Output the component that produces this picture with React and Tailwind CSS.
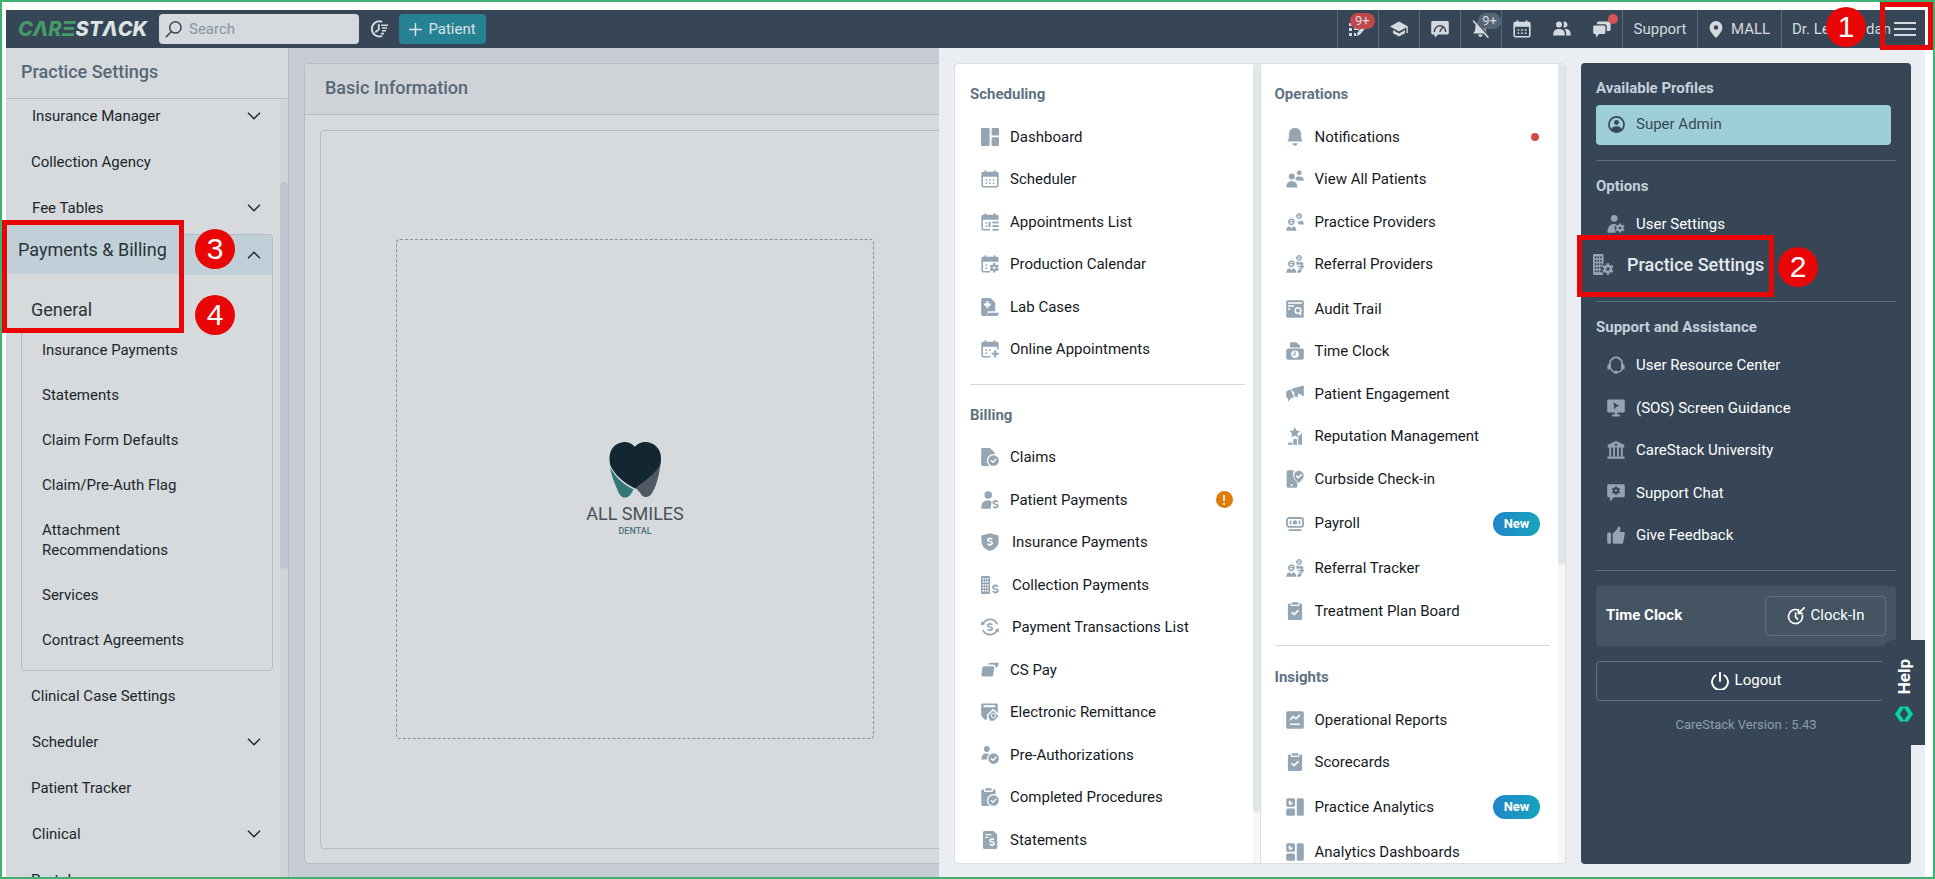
import React from "react";

const S = ({ children, size = "size-[18px]", cls = "" }) => (
  <svg viewBox="0 0 18 18" className={`${size} shrink-0 ${cls}`} fill="currentColor" aria-hidden="true">
    {children}
  </svg>
);

const Line = ({ d, w = 1.5, c = "currentColor" }) => (
  <path d={d} fill="none" stroke={c} strokeWidth={w} strokeLinecap="round" strokeLinejoin="round" />
);

const Gear = ({ x, y, r = 3, hole = "#fff", ring = "#fff" }) => (
  <g transform={`translate(${x} ${y})`}>
    <circle r={r + 2.2} fill={ring} />
    <circle r={r} />
    {[0, 60, 120].map((a) => (
      <rect key={a} x={-1.2} y={-r - 1.4} width={2.4} height={2 * r + 2.8} rx={0.5} transform={`rotate(${a})`} />
    ))}
    <circle r={r * 0.42} fill={hole} />
  </g>
);

const Dollar = ({ x, y, s = 1, c = "currentColor", w = 1.4 }) => (
  <g transform={`translate(${x} ${y}) scale(${s})`}>
    <path
      d="M2.3 -2.1C2 -3 1.2 -3.2 0 -3.2S-2.4 -2.8 -2.4 -1.6S-1.2 -.2 0 0S2.4 .4 2.4 1.6S1.4 3.2 0 3.2S-2.2 2.9 -2.5 2M0 -4.6V-3.2M0 3.2V4.6"
      fill="none" stroke={c} strokeWidth={w}
    />
  </g>
);

const CheckDisc = ({ x = 12.5, y = 12.5 }) => (
  <g transform={`translate(${x} ${y})`}>
    <circle r="6.6" fill="#fff" />
    <circle r="5.3" />
    <Line d="M-2.3 .1L-.6 1.8L2.5 -1.4" c="#fff" w={1.3} />
  </g>
);

const CalFrame = ({ full = true }) => (
  <>
    <path d="M2 1.8H16A1.6 1.6 0 0 1 17.6 3.4V6.8H.4V3.4A1.6 1.6 0 0 1 2 1.8Z" />
    <rect x="3.6" y="0.2" width="1.8" height="3" rx=".6" />
    <rect x="12.6" y="0.2" width="1.8" height="3" rx=".6" />
    <path d={full ? "M1.2 6V15.4A1.2 1.2 0 0 0 2.4 16.7H15.6A1.2 1.2 0 0 0 16.8 15.4V6" : "M1.2 6V15.4A1.2 1.2 0 0 0 2.4 16.7H9"} fill="none" stroke="currentColor" strokeWidth="1.6" />
  </>
);

const Dots = ({ pts }) => pts.map(([x, y]) => <rect key={`${x}-${y}`} x={x} y={y} width="1.6" height="1.6" />);

const Doctor = ({ x, y, s = 1 }) => (
  <g transform={`translate(${x} ${y}) scale(${s})`}>
    <circle cx="5" cy="3.2" r="2.6" fill="none" stroke="currentColor" strokeWidth="1.3" />
    <path d="M2.2 2.4H7.8V3.6H2.2Z" />
    <path d="M0 12C0 9 1.4 7.8 3.4 7.4L5 9.6L6.6 7.4C8.6 7.8 10 9 10 12Z" />
  </g>
);

const Tower = ({ hole }) => (
  <>
    <rect x="0" y="0" width="9" height="18" rx="1.2" />
    {[2, 5, 8, 11, 14].map((y) => (
      <g key={y} fill={hole}>
        <rect x="1.5" y={y} width="1.4" height="1.6" />
        <rect x="3.8" y={y} width="1.4" height="1.6" />
        <rect x="6.1" y={y} width="1.4" height="1.6" />
      </g>
    ))}
  </>
);

const Clipboard = () => (
  <>
    <path d="M3.2 1.4H4.6V3A1 1 0 0 0 5.6 4H12.4A1 1 0 0 0 13.4 3V1.4H14.8A1.3 1.3 0 0 1 16.1 2.7V16.6A1.3 1.3 0 0 1 14.8 17.9H3.2A1.3 1.3 0 0 1 1.9 16.6V2.7A1.3 1.3 0 0 1 3.2 1.4Z" />
    <rect x="5.6" y="0.3" width="6.8" height="2.4" rx=".8" />
    <Line d="M6.2 10.6L8.2 12.6L12 8.6" c="#fff" w={1.6} />
  </>
);

const Transfer = () => (
  <>
    <Doctor x={0.2} y={5.6} s={1.02} />
    <g transform="translate(9 0)">
      <circle cx="4" cy="3" r="2.3" fill="none" stroke="currentColor" strokeWidth="1.2" />
      <path d="M1.8 2.2H6.2V3.4H1.8Z" />
      <path d="M1 7.4L3.6 6.6L4.6 8L5.6 6.6L8.4 8.2V10H1.6Z" />
    </g>
    <path d="M11.4 15.4V9.6H18V18H11.4Z" fill="#fff" />
    <Line d="M12.2 11.6H17M15.4 9.8L17.2 11.6L15.4 13.2M14.6 13.6V16.2L12.4 17.2M13.8 14.6L12 16.8" w={1.5} />
  </>
);

const icons = {
  dashboard: <S><rect width="8.6" height="18" rx="1" /><rect x="10.6" width="7.4" height="7.6" rx="1" /><rect x="10.6" y="9.2" width="7.4" height="8.8" rx="1" /></S>,
  calendar: <S><CalFrame /><Dots pts={[[4.6, 9.2], [8.2, 9.2], [11.8, 9.2], [4.6, 12.4], [8.2, 12.4], [11.8, 12.4]]} /></S>,
  calList: <S><CalFrame full={false} /><Dots pts={[[4.6, 9.2], [4.6, 12.4]]} /><rect x="7.6" y="8.8" width="2" height="5.4" /><rect x="11.4" y="8.6" width="6.4" height="1.8" /><rect x="11.4" y="12.2" width="6.4" height="1.8" /><rect x="11.4" y="15.8" width="6.4" height="1.8" /></S>,
  calGear: <S><CalFrame full={false} /><Dots pts={[[4.6, 9.2], [4.6, 12.4]]} /><Gear x={13.2} y={12.8} r={3.3} /></S>,
  lab: <S><path d="M2 0H9.5L14.3 4.8V13.2H6.6V16C6.6 17.2 6.2 18 5 18H2A1.8 1.8 0 0 1 .2 16.2V1.8A1.8 1.8 0 0 1 2 0Z" /><path d="M7 14.8H17.8C17.8 17 16.8 18 15 18H6.2C6.8 17.2 7 16.4 7 14.8Z" /><path d="M6.4 3.2V10M3 6.6H9.8" stroke="#fff" strokeWidth="2.2" /></S>,
  calPlus: <S><path d="M2 1.8H16A1.6 1.6 0 0 1 17.6 3.4V6.8H.4V3.4A1.6 1.6 0 0 1 2 1.8Z" /><rect x="3.6" y=".2" width="1.8" height="3" rx=".6" /><rect x="12.6" y=".2" width="1.8" height="3" rx=".6" /><path d="M1.2 6V15.4A1.2 1.2 0 0 0 2.4 16.7H9.4M16.8 6V9.4" fill="none" stroke="currentColor" strokeWidth="1.6" /><Dots pts={[[4.6, 9.2], [8.2, 9.2], [4.6, 12.4]]} /><path d="M14.2 10.2V17.4M10.6 13.8H17.8" stroke="currentColor" strokeWidth="2" /></S>,
  claims: <S><path d="M1.6 0H9L13.6 4.6V18H1.6A1.4 1.4 0 0 1 .2 16.6V1.4A1.4 1.4 0 0 1 1.6 0Z" /><CheckDisc /></S>,
  patientPay: <S><circle cx="7.2" cy="4" r="3.8" /><path d="M.2 17.8C.2 11.8 2.6 9.4 7 9.4C8.6 9.4 9.8 9.8 10.6 10.4L9.6 17.8Z" /><Dollar x={14.6} y={13.2} s={0.98} w={1.7} /></S>,
  shield: <S><path d="M9 .2L17.6 2.6V8C17.6 13 14 16.4 9 17.8C4 16.4 .4 13 .4 8V2.6Z" /><Dollar x={9} y={8.6} s={0.95} c="#fff" w={1.6} /></S>,
  towerPay: <S><Tower hole="#fff" /><Dollar x={14.4} y={13} s={1.02} w={1.7} /></S>,
  transactions: <S><Line d="M2.2 5.4A7.8 7.8 0 0 1 16 5.6M2 12.4A7.8 7.8 0 0 0 16 12.2" w={1.7} /><path d="M17.8 10.2V14.6L13.8 12Z" /><path d="M.2 7.8V3.2L4.2 6Z" /><Dollar x={9} y={9} w={1.7} s={0.95} /></S>,
  cspay: <S><path d="M3 5.2H11.8A1.4 1.4 0 0 1 13.2 6.8L12.2 13.8A1.8 1.8 0 0 1 10.4 15.6H1.8A1.4 1.4 0 0 1 .4 14L1.4 7A1.8 1.8 0 0 1 3 5.2Z" /><path d="M6.8 3.6A3 3 0 0 1 9.6 1.8H17.8L17 5C16.4 6 15.6 6.6 14.6 6.6C14.6 4.8 13.6 3.6 11.8 3.6Z" /></S>,
  remit: <S><path d="M1.6 .4H15.4A1.4 1.4 0 0 1 16.8 1.8V15A1.4 1.4 0 0 1 15.4 16.4H3.4L.2 12.4V1.8A1.4 1.4 0 0 1 1.6 .4Z" /><rect x="2.6" y="2.2" width="11.6" height="2" fill="#fff" /><path d="M6.4 17.8L5.8 12L12 5.8L18 11V17.8Z" fill="#fff" /><path d="M7.2 12.8L12.2 7.8L17.4 13.2L12.6 17.8H9Z" /><circle cx="12.4" cy="12.6" r="2.1" fill="none" stroke="#fff" strokeWidth="1" /></S>,
  preauth: <S><circle cx="5.8" cy="3" r="2.9" /><path d="M.4 13.4C.4 9.4 2.4 7.6 5.6 7.6C8 7.6 9.4 8.2 10 9.6L7.6 13.4Z" /><CheckDisc x={12.6} y={12.6} /></S>,
  procedures: <S><path d="M1.6 1.4H3V3A1 1 0 0 0 4 4H11A1 1 0 0 0 12 3V1.4H13.2A1.3 1.3 0 0 1 14.5 2.7V17.9H1.6A1.3 1.3 0 0 1 .3 16.6V2.7A1.3 1.3 0 0 1 1.6 1.4Z" /><rect x="4.2" y=".3" width="6.6" height="2.2" rx=".8" /><CheckDisc /></S>,
  statement: <S><path d="M3.4 0H12.6L16.2 3.6V16.6A1.4 1.4 0 0 1 14.8 18H3.4A1.4 1.4 0 0 1 2 16.6V1.4A1.4 1.4 0 0 1 3.4 0Z" /><path d="M4.4 3.6H10.4M4.4 6.4H7.4" stroke="#fff" strokeWidth="1.4" /><Dollar x={11} y={11} s={0.9} c="#fff" w={1.6} /></S>,
  bell: <S><path d="M9 0C13 0 15 2.6 15 6.2C15 10.2 15.4 11.8 16.6 13.6H1.4C2.6 11.8 3 10.2 3 6.2C3 2.6 5 0 9 0Z" /><path d="M6.4 15.2H11.6C11.2 17 10.4 17.6 9 17.6S6.8 17 6.4 15.2Z" /></S>,
  people: <S><circle cx="5.8" cy="6.6" r="3" /><path d="M.3 17.6C.3 13 2.4 11.2 5.8 11.2S11.3 13 11.3 17.6Z" /><circle cx="13.2" cy="2.8" r="2.4" /><path d="M10.4 10.6C10 9.8 9.6 9.4 9.2 9C9.8 7.2 11.2 6.6 13.2 6.6C16.2 6.6 17.8 8 17.8 10.8Z" /></S>,
  doctors: <S><Doctor x={0.2} y={5.6} s={1.02} /><g transform="translate(9 0)"><circle cx="4" cy="3" r="2.3" fill="none" stroke="currentColor" strokeWidth="1.2" /><path d="M1.8 2.2H6.2V3.4H1.8Z" /><path d="M2 7.4L4 9L5.6 7.4C8 7.8 8.8 9 8.8 11.4H3.6Z" /></g></S>,
  transfer: <S><Transfer /></S>,
  audit: <S><rect x=".2" y=".2" width="17.6" height="17.6" rx="1.6" /><path d="M2 3H16M2 6H8M2 9H4.2" stroke="#fff" strokeWidth="1.4" /><circle cx="12" cy="10.6" r="2.8" fill="none" stroke="#fff" strokeWidth="1.5" /><path d="M13.8 12.6L15 15" stroke="#fff" strokeWidth="1.7" /></S>,
  timeclock: <S><path d="M4 5.4V1.4A1.2 1.2 0 0 1 5.2 .2H10.4L14 3.6V5.4Z" /><rect x=".2" y="6.6" width="17.6" height="11.2" rx="1.8" /><circle cx="9" cy="12.2" r="3.8" fill="#fff" /><Line d="M9 9.8V12.6H7.4" w={1.3} /></S>,
  megaphone: <S><path d="M17.8 .6V11.6L12.6 8.2L11.4 12.6L8.4 11.2L8.2 7L5.6 5.4L6.4 3.4Z" /><path d="M4.4 4.2L6.2 8L8 12.6L4.8 13L2.2 16.8L1.8 13L.2 12.2V6.4Z" /></S>,
  reputation: <S><path d="M8.8 0L10.4 3.6L14.2 4L11.4 6.6L12.2 10.4L8.8 8.4L5.4 10.4L6.2 6.6L3.4 4L7.2 3.6Z" /><rect x="2.2" y="15.6" width="4" height="2.2" /><rect x="7.2" y="12" width="3.8" height="5.8" /><path d="M12.2 9.4L14.6 7.6L16 5.2V17.8H12.2Z" /></S>,
  curbside: <S><path d="M2.2 .2H8C6.2 4 6.6 8 11.4 12.2V16.2A1.6 1.6 0 0 1 9.8 17.8H2.2A1.6 1.6 0 0 1 .6 16.2V1.8A1.6 1.6 0 0 1 2.2 .2Z" /><circle cx="5.8" cy="15.2" r="1" fill="#fff" /><path d="M12.8 .6C16 .6 18 2.8 18 5.8C18 9 15 11.4 12.8 13.2C10.6 11.4 7.8 9 7.8 5.8C7.8 2.8 9.8 .6 12.8 .6Z" stroke="#fff" strokeWidth=".6" /><Line d="M10.4 6L12.2 7.8L15.6 4.4" c="#fff" w={1.4} /></S>,
  payroll: <S><rect x="1" y="3" width="16" height="8.8" rx="2" fill="none" stroke="currentColor" strokeWidth="1.8" /><rect x="3.8" y="5.4" width="1.6" height="4" /><rect x="12.6" y="5.4" width="1.6" height="4" /><circle cx="9" cy="7.4" r="2.2" /><rect x="2.4" y="14.2" width="13.2" height="1.8" rx=".8" /></S>,
  clipboard: <S><Clipboard /></S>,
  report: <S><rect x=".2" y=".2" width="17.6" height="17.6" rx="1.6" /><Line d="M4.6 8.4L7.4 5.4L9.8 7.8L13.4 4.4M4.6 13.2H13.4" c="#fff" w={1.6} /></S>,
  analytics: <S><rect x=".2" y=".2" width="8.8" height="8.6" rx="1.6" /><path d="M4.6 2.4A2.2 2.2 0 1 0 6.8 4.6H4.6Z" fill="#fff" /><rect x=".2" y="10.6" width="8.8" height="7.2" rx="1.6" /><rect x="10.8" y=".2" width="7" height="17.6" rx="1.6" /></S>,
  userGear: <S><circle cx="7.2" cy="3.4" r="3.3" /><path d="M.4 17.8C.4 11.4 3 9 7.4 9C9 9 10 9.4 10.8 10L8.4 17.8Z" /><Gear x={13} y={13} r={3.2} hole="#364656" ring="#364656" /></S>,
  headset: <S><Line d="M2.8 9.4V8A6.2 6.6 0 0 1 15.2 8V9.4" w={1.7} /><rect x=".4" y="8" width="3.6" height="5.6" rx="1.6" /><rect x="14" y="8" width="3.6" height="5.6" rx="1.6" /><Line d="M4 13C4.6 15 6 16 8.6 16.2M15 13C14.4 15 12.6 16 10 16.2" w={1.4} /><rect x="7" y="14.8" width="4" height="3" rx="1.2" /></S>,
  screen: <S><rect x=".2" y=".4" width="17.6" height="13" rx="1.4" /><path d="M6.4 3.4L12.4 7L9.2 7.8L7.6 10.8Z" fill="#364656" /><rect x="7.8" y="13" width="2.4" height="3" /><rect x="5" y="15.6" width="8" height="2" rx=".8" /></S>,
  bank: <S><path d="M9 0L17.2 3.8V6.4H.8V3.8Z" /><circle cx="9" cy="3.8" r="1.2" fill="#364656" /><path d="M3.2 6V15.4M7 6V15.4M11 6V15.4M14.8 6V15.4" stroke="currentColor" strokeWidth="1.9" /><rect x=".4" y="15.6" width="17.2" height="2.2" rx=".5" /></S>,
  chatGear: <S><path d="M1.6 .2H16.4A1.4 1.4 0 0 1 17.8 1.6V11.8A1.4 1.4 0 0 1 16.4 13.2H6.8L3.2 17.6L2.8 13.2H1.6A1.4 1.4 0 0 1 .2 11.8V1.6A1.4 1.4 0 0 1 1.6 .2Z" /><g fill="#364656"><Gear x={9} y={6.7} r={2.7} hole="#94a5b1" ring="#94a5b1" /></g></S>,
  thumb: <S><rect x=".2" y="6.6" width="3.8" height="11.2" rx="1.2" /><path d="M5.6 7.4C8.6 5.4 10.6 2.6 11.4 .4C13.8 .4 13.8 2.8 12.6 6H16.4C17.6 6 18 7 17.8 8L16.2 16.2C16 17.2 15.4 17.8 14.4 17.8H7.4C6.2 17.8 5.6 17.2 5.6 16Z" /></S>,
};

const scheduling = [["dashboard", "Dashboard"], ["calendar", "Scheduler"], ["calList", "Appointments List"], ["calGear", "Production Calendar"], ["lab", "Lab Cases"], ["calPlus", "Online Appointments"]];
const billing = [["claims", "Claims"], ["patientPay", "Patient Payments", "warn"], ["shield", "Insurance Payments"], ["towerPay", "Collection Payments"], ["transactions", "Payment Transactions List"], ["cspay", "CS Pay"], ["remit", "Electronic Remittance"], ["preauth", "Pre-Authorizations"], ["procedures", "Completed Procedures"], ["statement", "Statements"]];
const operations = [["bell", "Notifications", "dot"], ["people", "View All Patients"], ["doctors", "Practice Providers"], ["transfer", "Referral Providers"], ["audit", "Audit Trail"], ["timeclock", "Time Clock"], ["megaphone", "Patient Engagement"], ["reputation", "Reputation Management"], ["curbside", "Curbside Check-in"], ["payroll", "Payroll", "new"], ["transfer", "Referral Tracker"], ["clipboard", "Treatment Plan Board"]];
const insights = [["report", "Operational Reports"], ["clipboard", "Scorecards"], ["analytics", "Practice Analytics", "new"], ["analytics", "Analytics Dashboards"]];
const support = [["headset", "User Resource Center"], ["screen", "(SOS) Screen Guidance"], ["bank", "CareStack University"], ["chatGear", "Support Chat"], ["thumb", "Give Feedback"]];
const wideGap = ["shield", "towerPay", "transactions"];

function Mark({ kind }) {
  if (kind === "dot") return <span className="mr-px size-2 rounded-full bg-[#d14b4b]" />;
  if (kind === "warn")
    return <span className="mr-0.5 flex size-[17px] items-center justify-center rounded-full bg-[#dc7c0c]"><svg viewBox="0 0 4 10" className="h-2.5 w-1" fill="#fbe3c4" aria-hidden="true"><rect x="1" width="2" height="6.4" /><rect x="1" y="8" width="2" height="2" /></svg></span>;
  if (kind === "new")
    return <span className="flex h-6 w-[47px] items-center justify-center rounded-full bg-linear-to-r from-[#2286c8] to-[#16a3bd] text-[13px] font-bold text-white">New</span>;
  return null;
}

function MenuSection({ title, items }) {
  return (
    <section className="pt-[19px]">
      <h3 className="mb-2.5 font-bold text-[#5f7283]">{title}</h3>
      <ul>
        {items.map(([icon, label, mark]) => (
          <li key={label} className={label === "Audit Trail" ? "pt-0.5" : ""}>
            <a href="#" className={`flex items-center pr-2.5 pl-[11px] ${mark === "new" ? "h-[47px]" : "py-2.5"}`}>
              <span className="text-[#94a5b3]">{icons[icon]}</span>
              <span className={`flex-1 text-[#151a1f] ${wideGap.includes(icon) ? "ml-[13px]" : "ml-[11px]"}`}>{label}</span>
              <Mark kind={mark} />
            </a>
          </li>
        ))}
      </ul>
    </section>
  );
}

function Scrollbar({ thumb, track }) {
  return (
    <div className={`flex w-[7px] shrink-0 flex-col ${track}`} aria-hidden="true">
      <div className={`rounded-full bg-[#e1e6ea] ${thumb}`} />
    </div>
  );
}

const Chevron = ({ up }) => (
  <svg viewBox="0 0 14 8" className="h-2 w-3.5 shrink-0" fill="none" stroke="#20262c" strokeWidth="1.4" aria-hidden="true">
    <path d={up ? "M1 7.2L7 1.2L13 7.2" : "M1 .8L7 6.8L13 .8"} />
  </svg>
);

function SideRow({ label, open }) {
  return (
    <button className={`flex h-[46px] w-full shrink-0 items-center justify-between pr-[13px] text-left ${open ? "pl-[26px]" : "pl-[25px]"}`}>
      {label}
      {open && <Chevron />}
    </button>
  );
}

function Step({ n, place }) {
  return (
    <div className={`absolute z-30 flex size-10 items-center justify-center rounded-full bg-[#e90606] font-['Liberation_Sans',sans-serif] text-[30px] leading-none text-white ${place}`}>
      {n}
    </div>
  );
}

function Nav() {
  const cell = "flex w-[41px] items-center justify-center border-l border-[#5a6a79] relative";
  const plain = "flex w-10 items-center justify-center relative";
  return (
    <header className="flex h-[38px] shrink-0 items-stretch bg-[#364656] pl-3 text-[#d6dade]">
      <a href="#" aria-label="CareStack" className="flex w-[141px] items-center font-['Inter',sans-serif] text-[20px] leading-none font-extrabold italic">
        <span className="text-[#459a68]">CΛRΞ</span><span className="text-[#dfe2e5]">STΛCK</span>
      </a>
      <label className="my-1 flex w-[200px] items-center gap-[7px] rounded-[4px] bg-[#d6dade] px-[6px] text-[#364656]">
        <svg viewBox="0 0 18 18" className="size-[17px] shrink-0" fill="none" stroke="currentColor" strokeWidth="1.6" aria-hidden="true"><circle cx="11" cy="6.8" r="6" /><path d="M6.8 11.2L.8 17.2" /></svg>
        <input aria-label="Search" placeholder="Search" className="w-full bg-transparent outline-none placeholder:text-[#8495a3]" />
      </label>
      <button aria-label="Recent" className="flex w-10 items-center justify-center">
        <S><Line d="M11.6 1.6A7.6 7.6 0 1 0 11.6 16.2M8.8 5V9.4L6 11.8" w={1.9} /><path d="M11 4.4H18V6H11ZM12 7.2H17V8.8H12ZM12 10H16V11.6H12ZM11 12.8H14V14.4H11Z" /></S>
      </button>
      <button className="my-1 flex w-[87px] items-center justify-center gap-1.5 rounded-[4px] bg-[#268193] text-[#d9e1e4]">
        <svg viewBox="0 0 14 14" className="size-[13px]" stroke="currentColor" strokeWidth="1.6" aria-hidden="true"><path d="M7 0V14M0 7H14" /></svg>
        Patient
      </button>
      <div className="flex-1" />
      <button aria-label="Tasks" className={cell}>
        <S><path d="M0 3H3V6H0ZM0 8H3V11H0ZM0 13H3V16H0ZM5 3H12V5H5ZM5 8H10V10H5ZM5 13H7V16H5Z" /><path d="M15 3.5L18 6.5L11 14.5L7.4 16.2L8.8 12.2Z" /></S>
        <span className="absolute top-[3px] left-3 rounded-full bg-[#c0484b] px-[5px] text-[13px] leading-4">9+</span>
      </button>
      <button aria-label="Learning" className={cell}>
        <S><path d="M9 1.6L18 6.6L9 11.6L0 6.6Z" /><path d="M3 10L9 13.4L15 10V13.2L9 16.6L3 13.2Z" /><rect x="16.4" y="7" width="1.4" height="6" /></S>
      </button>
      <button aria-label="Performance" className={cell}>
        <S><path d="M1.6 1H16.4A1.4 1.4 0 0 1 17.8 2.4V13A1.4 1.4 0 0 1 16.4 14.4H7L4 17.4L3.4 14.4H1.6A1.4 1.4 0 0 1 .2 13V2.4A1.4 1.4 0 0 1 1.6 1Z" /><Line d="M3.4 11.4A5.6 5.6 0 0 1 14.6 11.4M9 11.4L12 6.6" c="#364656" w={1.5} /></S>
      </button>
      <button aria-label="Muted alerts" className={cell}>
        <S><path d="M3.4 7C3.4 3.6 5.6 1.6 8.4 1.6C11.6 1.6 13.4 4 13.4 7C13.4 10 13.8 11.6 15.4 13.4H1.2C2.8 11.6 3.4 10 3.4 7Z" /><path d="M6.2 14.6H10.6C10.2 16.4 9.4 17 8.4 17S6.6 16.4 6.2 14.6Z" /><path d="M2.6 .2L17 16.4" stroke="#364656" strokeWidth="1.6" /><Line d="M1.4 1L16 17.2" w={1.6} /></S>
        <span className="absolute top-[3px] right-0 rounded-full bg-[#536577] px-[4px] text-[13px] leading-4">9+</span>
      </button>
      <button aria-label="Calendar" className={cell}><S><CalFrame /><Dots pts={[[4.6, 9.2], [8.2, 9.2], [11.8, 9.2], [4.6, 12.4], [8.2, 12.4], [11.8, 12.4]]} /></S></button>
      <button aria-label="Patients" className={plain}>
        <S><circle cx="6" cy="4.6" r="3" /><path d="M.2 14.6C.2 10.6 2.6 9 6 9S11.8 10.6 11.8 14.6V15.6H.2Z" /><path d="M10.4 1.8A3 3 0 1 1 10.4 7.4C11 5.6 11 3.6 10.4 1.8ZM13.2 15.6C13.4 12.4 12.8 10.6 11.6 9C15.6 8.8 17.8 10.6 17.8 14.6V15.6Z" /></S>
      </button>
      <button aria-label="Messages" className={plain}>
        <S><path d="M1.6 5.4H11A1.4 1.4 0 0 1 12.4 6.8V12.6A1.4 1.4 0 0 1 11 14H6L3.2 17.4L2.6 14H1.6A1.4 1.4 0 0 1 .2 12.6V6.8A1.4 1.4 0 0 1 1.6 5.4Z" /><path d="M4 4.2V3A1.6 1.6 0 0 1 5.6 1.4H16A1.6 1.6 0 0 1 17.6 3V9.4A1.6 1.6 0 0 1 16 11H13.8V6.4A2.2 2.2 0 0 0 11.6 4.2Z" /></S>
        <span className="absolute top-1 right-1 size-2.5 rounded-full bg-[#d65353]" />
      </button>
      <a href="#" className="flex w-[75px] items-center justify-center border-l border-[#5a6a79]">Support</a>
      <button className="flex w-[84px] items-center justify-center gap-2 border-l border-[#5a6a79]">
        <svg viewBox="0 0 14 18" className="h-[17px] w-3.5" fill="currentColor" aria-hidden="true"><path fillRule="evenodd" d="M7 0A6.8 6.8 0 0 1 13.8 6.8C13.8 11 10 14.6 7 18C4 14.6 .2 11 .2 6.8A6.8 6.8 0 0 1 7 0ZM7 4.4A2.4 2.4 0 1 0 7 9.2A2.4 2.4 0 1 0 7 4.4Z" /></svg>
        MALL
      </button>
      <button className="flex w-[108px] items-center border-l border-[#5a6a79] pl-2.5 whitespace-nowrap">Dr. Levi Jordan</button>
      <button aria-label="Menu" className="flex w-9 flex-col items-start justify-center gap-1 pl-[5px]">
        <span className="h-0.5 w-[22px] bg-[#d6dade]" /><span className="h-0.5 w-[22px] bg-[#d6dade]" /><span className="h-0.5 w-[22px] bg-[#d6dade]" />
      </button>
    </header>
  );
}

function Sidebar() {
  const sub = "flex min-h-[45px] w-full items-center pl-5 text-left leading-5";
  return (
    <aside className="flex w-[283px] shrink-0 flex-col border-r border-[#b7bccb] bg-[#d6dadd] text-[#20262c]">
      <h2 className="flex h-[51px] shrink-0 items-center border-b border-[#b7bccb] px-[15px] pb-1 text-[18px] font-medium text-[#566878]">Practice Settings</h2>
      <div className="flex min-h-0 flex-1">
        <nav className="flex min-w-0 flex-1 flex-col overflow-hidden">
          <div className="-mt-1.5"><SideRow label="Insurance Manager" open /></div>
          <SideRow label="Collection Agency" />
          <SideRow label="Fee Tables" open />
          <div className="mt-[3px] mr-[1px] mb-0.5 ml-[15px] shrink-0 rounded-[4px] border border-[#b4bbca]">
            <button aria-label="Collapse" className="flex h-10 w-full items-center justify-end rounded-t-[4px] bg-[#c1d0d8] pr-[11px]"><Chevron up /></button>
            <div className="pt-[52px] pb-2">
              <button className={sub}>Insurance Payments</button>
              <button className={sub}>Statements</button>
              <button className={sub}>Claim Form Defaults</button>
              <button className={sub}>Claim/Pre-Auth Flag</button>
              <button className={`${sub} h-[65px] pr-16`}>Attachment Recommendations</button>
              <button className={sub}>Services</button>
              <button className={sub}>Contract Agreements</button>
            </div>
          </div>
          <SideRow label="Clinical Case Settings" />
          <SideRow label="Scheduler" open />
          <SideRow label="Patient Tracker" />
          <SideRow label="Clinical" open />
          <SideRow label="Portal" />
        </nav>
        <div className="ml-1.5 w-2 shrink-0 bg-[#d0d3da] pt-[83px]" aria-hidden="true"><div className="h-[387px] rounded-full bg-[#c0c4cf]" /></div>
      </div>
    </aside>
  );
}

function ClinicLogo() {
  return (
    <div className="flex flex-col items-center">
      <svg viewBox="0 0 50 54" className="h-14 w-[52px]" aria-hidden="true">
        <path d="M25 4.5C30-.5 37-1 43 2.5C49 6.5 51 13 49.5 22C48 34 45 44 41 50C37.5 54.5 32 54 30 49L26 44.5L40 33Z" fill="#4f5864" />
        <path d="M1 24C6 34 14 41 23.5 45.5C22 49 20 53 16 53.5C12 54 10 51 8.5 47C5 39 2 32 1 24Z" fill="#357678" />
        <path d="M25 4.5C31-1 37-1 43 2.5C49 6.5 51 13 49.5 21C46 30 34 38 25.5 45C15 40 5 32 1 22C-.5 13 1 6.500 7 2.5C13-1 19-1 25 4.5Z" fill="#132732" />
      </svg>
      <div className="mt-1.5 text-[18px] leading-5 text-[#4a525a]">ALL SMILES</div>
      <div className="mt-px text-[9px] leading-3 font-medium text-[#4f7484]">DENTAL</div>
    </div>
  );
}

function MainArea() {
  return (
    <main className="flex min-w-0 flex-1 bg-[#c7cbd4] pt-[15px] pb-[13px] pl-[15px]">
      <div className="flex flex-1 flex-col rounded-[4px] border border-[#b7bccb] bg-[#d6dadd]">
        <h2 className="flex h-[51px] shrink-0 items-center border-b border-[#b7bccb] bg-[#d0d3d8] px-5 pb-1 text-[18px] font-medium text-[#566878]">Basic Information</h2>
        <div className="m-[15px] mb-[14px] flex flex-1 rounded-[4px] border border-[#b7bccb] pt-[108px] pb-[109px] pl-[75px]">
          <div className="flex w-[478px] items-center justify-center rounded-[4px] border border-dashed border-[#8b9097]"><ClinicLogo /></div>
        </div>
      </div>
    </main>
  );
}

function ProfilePanel() {
  const head = "font-bold text-[#c5d0da]";
  const row = "flex items-center gap-[11px] py-2.5 pl-[11px] text-white";
  return (
    <div className="flex min-h-0 w-[330px] shrink-0 flex-col rounded-[4px] bg-[#364656] px-[15px] pt-[14px]">
      <h3 className={head}>Available Profiles</h3>
      <button className="mt-[5px] mr-[5px] flex h-10 shrink-0 items-center gap-[11px] rounded-[4px] bg-[#9fcfd6] pl-3 text-[#364656]">
        <S size="size-[17px]"><circle cx="9" cy="9" r="8" fill="none" stroke="currentColor" strokeWidth="1.8" /><circle cx="9" cy="6.8" r="2.6" /><path d="M3.4 14.6C4 12 6 10.8 9 10.8S14 12 14.6 14.6L9 17Z" /></S>
        Super Admin
      </button>
      <hr className="mt-[15px] border-[#5b6c7b]" />
      <h3 className={`${head} mt-[14px]`}>Options</h3>
      <a href="#" className={`${row} mt-1.5`}><span className="text-[#94a5b1]">{icons.userGear}</span>User Settings</a>
      <hr className="mt-[55px] border-[#5b6c7b]" />
      <h3 className={`${head} mt-[14px]`}>Support and Assistance</h3>
      <ul className="mt-1.5">
        {support.map(([i, l]) => (
          <li key={l}><a href="#" className={row}><span className="text-[#94a5b1]">{icons[i]}</span>{l}</a></li>
        ))}
      </ul>
      <hr className="mt-[13px] border-[#5b6c7b]" />
      <div className="mt-[15px] flex h-[60px] shrink-0 items-center justify-between rounded-[4px] bg-[#445463] px-2.5 text-white">
        <span className="font-bold">Time Clock</span>
        <button className="flex h-10 w-[121px] items-center justify-center gap-1.5 rounded-[4px] border border-[#5f7080]">
          <S><Line d="M10.4 2.8A7 7 0 1 0 15.4 8.4M8.6 6V10.2L10.6 12M17.2 .8L11.6 6.2M11.4 2.8V6.4H15" w={1.7} /></S>
          Clock-In
        </button>
      </div>
      <button className="mt-[15px] flex h-10 shrink-0 items-center justify-center gap-1.5 rounded-[4px] border border-[#5f7080] text-white">
        <S><Line d="M4.6 3.2A8 8 0 1 0 13.4 3.2M9 .8V9" w={1.9} /></S>
        Logout
      </button>
      <p className="mt-[14px] text-center text-[13px] leading-5 text-[#8a9dab]">CareStack Version : 5.43</p>
    </div>
  );
}

export default function App() {
  return (
    <div className="relative h-screen overflow-hidden border-2 border-[#3cb371] bg-white pt-2 pr-2 pl-1 font-['Roboto',sans-serif] text-[15px] leading-normal">
      <div className="relative flex h-full flex-col">
        <Nav />
        <div className="relative flex min-h-0 flex-1">
          <Sidebar />
          <MainArea />
          <div className="absolute inset-y-0 right-0 flex w-[986px] justify-between bg-[#eaeef2] pt-[15px] pr-[14px] pb-[13px] pl-[15px]">
            <div className="flex w-[612px] overflow-hidden rounded-[4px] border border-[#d9dfe5] bg-white">
              <div className="flex flex-1 border-r border-[#d9dfe5]">
                <div className="min-w-0 flex-1 pr-2 pl-[15px]">
                  <MenuSection title="Scheduling" items={scheduling} />
                  <hr className="mt-[13px] border-[#d3dbe2]" />
                  <MenuSection title="Billing" items={billing} />
                </div>
                <Scrollbar thumb="h-[748px]" track="bg-[#f5f7f9]" />
              </div>
              <div className="flex flex-1">
                <div className="min-w-0 flex-1 pr-2 pl-[14px]">
                  <MenuSection title="Operations" items={operations} />
                  <hr className="mt-[13px] mb-px border-[#d3dbe2]" />
                  <MenuSection title="Insights" items={insights} />
                </div>
                <Scrollbar thumb="h-[501px]" track="bg-[#f5f7f9]" />
              </div>
            </div>
            <ProfilePanel />
          </div>
          <button className="absolute top-[592px] right-0 flex h-[105px] w-[43px] flex-col items-center rounded-tl-[12px] bg-[#364656] pt-[19px]">
            <span className="rotate-180 text-[17px] leading-[22px] font-bold text-white [writing-mode:vertical-rl]">Help</span>
            <svg viewBox="0 0 18 16" className="mt-3 h-4 w-[18px]" aria-hidden="true"><path fillRule="evenodd" fill="#06d6a0" d="M5 .5H13L18 8L13 15.5H5L0 8ZM9 1.6L4.8 8L9 14.4L13.2 8Z" /></svg>
          </button>
        </div>
      </div>

      <div className="absolute top-[218px] left-0 z-20 flex h-[113px] w-[182px] flex-col border-[5px] border-[#e90606] bg-[#d6dadd] text-[18px] text-[#2b3238]">
        <button className="flex h-[49px] items-center bg-[#c1d0d8] pl-[11px] whitespace-nowrap">Payments &amp; Billing</button>
        <button className="flex flex-1 items-center pt-4 pl-6">General</button>
      </div>
      <div className="absolute top-[233px] right-[159px] z-20 flex h-[62px] w-[197px] gap-[13px] border-[5px] border-[#e90606] bg-[#364656] pt-[14px] pl-[11px] text-[18px] leading-[22px] font-medium whitespace-nowrap text-[#e6eaee]">
        <span className="text-[#94a5b1]"><S size="size-[21px]"><Tower hole="#364656" /><Gear x={12.8} y={12.8} r={3.5} hole="#364656" ring="#364656" /></S></span>
        <a href="#">Practice Settings</a>
      </div>
      <div className="absolute top-0 right-0 z-20 h-12 w-[53px] border-[5px] border-[#e90606]" />
      <Step n={1} place="top-[5px] right-[67px]" />
      <Step n={2} place="top-[245px] right-[115px]" />
      <Step n={3} place="top-[227px] left-[193px]" />
      <Step n={4} place="top-[293px] left-[193px]" />
    </div>
  );
}
